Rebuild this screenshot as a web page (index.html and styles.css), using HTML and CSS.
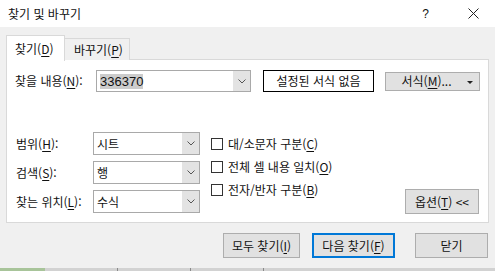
FILE: index.html
```html
<!DOCTYPE html>
<html lang="ko">
<head>
  <meta charset="UTF-8" />
  <title>찾기 및 바꾸기</title>
  <link rel="stylesheet" href="styles.css">
</head>
<body>
  <div class="window">
    <div class="titlebar">
      <span class="title">찾기 및 바꾸기</span>
      <span class="help">?</span>
      <svg class="close" width="11" height="11" viewBox="0 0 11 11">
        <path d="M0.5 0.5 L10.5 10.5 M10.5 0.5 L0.5 10.5" stroke="#222" stroke-width="1" fill="none"/>
      </svg>
    </div>

    <div class="content">
      <div class="tabs">
        <div class="tab active">찾기(<u>D</u>)</div>
        <div class="tab">바꾸기(<u>P</u>)</div>
      </div>

      <div class="panel">
        <div class="find-row">
          <label class="find-label">찾을 내용(<u>N</u>):</label>
          <div class="combo find-combo">
            <span class="combo-text"><span class="selected">336370</span></span>
            <span class="combo-arrow">
              <svg width="8" height="5" viewBox="0 0 8 5"><path d="M0.5 0.5 L4 4 L7.5 0.5" stroke="#555" fill="none"/></svg>
            </span>
          </div>
          <div class="format-preview">설정된 서식 없음</div>
          <div class="btn format-btn">서식(<u>M</u>)... <span class="caret"></span></div>
        </div>

        <div class="options">
          <div class="fields">
            <div class="field">
              <label class="field-label">범위(<u>H</u>):</label>
              <div class="combo field-combo">
                <span class="combo-text">시트</span>
                <span class="combo-arrow"><svg width="8" height="5" viewBox="0 0 8 5"><path d="M0.5 0.5 L4 4 L7.5 0.5" stroke="#555" fill="none"/></svg></span>
              </div>
            </div>
            <div class="field">
              <label class="field-label">검색(<u>S</u>):</label>
              <div class="combo field-combo">
                <span class="combo-text">행</span>
                <span class="combo-arrow"><svg width="8" height="5" viewBox="0 0 8 5"><path d="M0.5 0.5 L4 4 L7.5 0.5" stroke="#555" fill="none"/></svg></span>
              </div>
            </div>
            <div class="field">
              <label class="field-label">찾는 위치(<u>L</u>):</label>
              <div class="combo field-combo">
                <span class="combo-text">수식</span>
                <span class="combo-arrow"><svg width="8" height="5" viewBox="0 0 8 5"><path d="M0.5 0.5 L4 4 L7.5 0.5" stroke="#555" fill="none"/></svg></span>
              </div>
            </div>
          </div>

          <div class="checks">
            <div class="check"><span class="box"></span>대/소문자 구분(<u>C</u>)</div>
            <div class="check"><span class="box"></span>전체 셀 내용 일치(<u>O</u>)</div>
            <div class="check"><span class="box"></span>전자/반자 구분(<u>B</u>)</div>
          </div>

          <div class="btn options-btn">옵션(<u>T</u>) &lt;&lt;</div>
        </div>
      </div>

      <div class="actions">
        <div class="btn act-all">모두 찾기(<u>I</u>)</div>
        <div class="btn act-next default">다음 찾기(<u>F</u>)</div>
        <div class="btn act-close">닫기</div>
      </div>
    </div>

    <div class="sheet-strip">
      <span class="sheet-sel"></span>
      <span class="sheet-col"></span>
      <span class="sheet-col"></span>
      <span class="sheet-col"></span>
    </div>
  </div>
</body>
</html>
```

FILE: styles.css
```css
body {
  margin: 0;
  background: #f0f0f0;
  font-family: "Noto Sans CJK KR", "Noto Sans", sans-serif;
  font-size: 12px;
  color: #111;
  white-space: nowrap;
}
u {
  text-decoration-thickness: 1px;
  text-underline-offset: 2px;
}
.window {
  width: 495px;
  height: 271px;
  overflow: hidden;
  display: flex;
  flex-direction: column;
}
.titlebar {
  height: 27px;
  flex: none;
  background: #fff;
  display: flex;
  align-items: center;
  padding-left: 8px;
}
.title {
  line-height: 14px;
}
.help {
  margin-left: auto;
  font-family: "Liberation Sans", sans-serif;
  font-size: 12px;
}
.close {
  margin-left: 39px;
  margin-right: 16px;
}
.content {
  padding: 8px 6px 0 6px;
}
.tabs {
  display: flex;
  align-items: flex-end;
  height: 25px;
  position: relative;
  z-index: 1;
}
.tab {
  height: 22px;
  box-sizing: border-box;
  border: 1px solid #d9d9d9;
  border-bottom: none;
  padding: 0 7px;
  display: flex;
  align-items: center;
  background: #f0f0f0;
  line-height: 14px;
}
.tab.active {
  height: 26px;
  margin-bottom: -1px;
  background: #fff;
  width: 59px;
  padding-left: 8px;
}
.tab + .tab {
  border-left: none;
  width: 65px;
  padding: 0 0 0 9px;
}
.panel {
  height: 164px;
  box-sizing: border-box;
  width: 483px;
  border: 1px solid #d9d9d9;
  background: #fff;
  margin-top: -1px;
  padding: 10px 8px 0 8px;
}
.find-row {
  display: flex;
  align-items: center;
  height: 22px;
}
.find-label {
  width: 81px;
  line-height: 14px;
}
.combo {
  display: flex;
  box-sizing: border-box;
  border: 1px solid #a9a9a9;
  background: #fff;
}
.combo-text {
  flex: 1;
  display: flex;
  align-items: center;
  padding-left: 3px;
  line-height: 14px;
}
.combo-arrow {
  width: 17px;
  background: #e3e3e3;
  display: flex;
  align-items: center;
  justify-content: center;
}
.find-combo {
  width: 155px;
  height: 22px;
}
.selected {
  background: #cccccc;
  font-family: "Liberation Sans", sans-serif;
  font-size: 13px;
  line-height: 15px;
}
.format-preview {
  margin-left: 12px;
  width: 111px;
  height: 22px;
  box-sizing: border-box;
  border: 1px solid #000;
  display: flex;
  align-items: center;
  justify-content: center;
  line-height: 14px;
}
.btn {
  box-sizing: border-box;
  background: #e1e1e1;
  border: 1px solid #adadad;
  display: flex;
  align-items: center;
  justify-content: center;
  line-height: 14px;
}
.format-btn {
  margin-left: 11px;
  width: 95px;
  height: 19px;
  position: relative;
  padding-right: 12px;
}
.caret {
  position: absolute;
  right: 6px;
  top: 8px;
  border-left: 3px solid transparent;
  border-right: 3px solid transparent;
  border-top: 3px solid #222;
}
.options {
  display: flex;
  margin-top: 40px;
  margin-left: 1px;
}
.fields {
  display: flex;
  flex-direction: column;
  gap: 6px;
}
.field {
  display: flex;
  align-items: center;
}
.field-label {
  width: 77px;
  line-height: 14px;
}
.field-combo {
  width: 107px;
  height: 23px;
}
.checks {
  margin-left: 11px;
  display: flex;
  flex-direction: column;
}
.check {
  height: 23px;
  display: flex;
  align-items: center;
  line-height: 14px;
}
.box {
  width: 12px;
  height: 12px;
  box-sizing: border-box;
  border: 1px solid #333;
  margin-right: 5px;
}
.options-btn {
  align-self: flex-end;
  margin-left: auto;
  width: 74px;
  height: 25px;
  margin-bottom: -1px;
  margin-right: 1px;
}
.actions {
  display: flex;
  justify-content: flex-end;
  margin-top: 10px;
}
.actions .btn {
  height: 25px;
}
.act-all {
  width: 77px;
}
.act-next {
  width: 83px;
  margin-left: 12px;
}
.act-next.default {
  border: 2px solid #0078d7;
}
.act-close {
  width: 73px;
  margin-left: 20px;
  margin-right: 1px;
}
.sheet-strip {
  margin-top: auto;
  height: 3px;
  display: flex;
  background: #d2d2d2;
}
.sheet-sel {
  width: 45px;
  background: #a8c49a;
}
.sheet-col {
  width: 72px;
  border-right: 1px solid #8a8a8a;
}
```
